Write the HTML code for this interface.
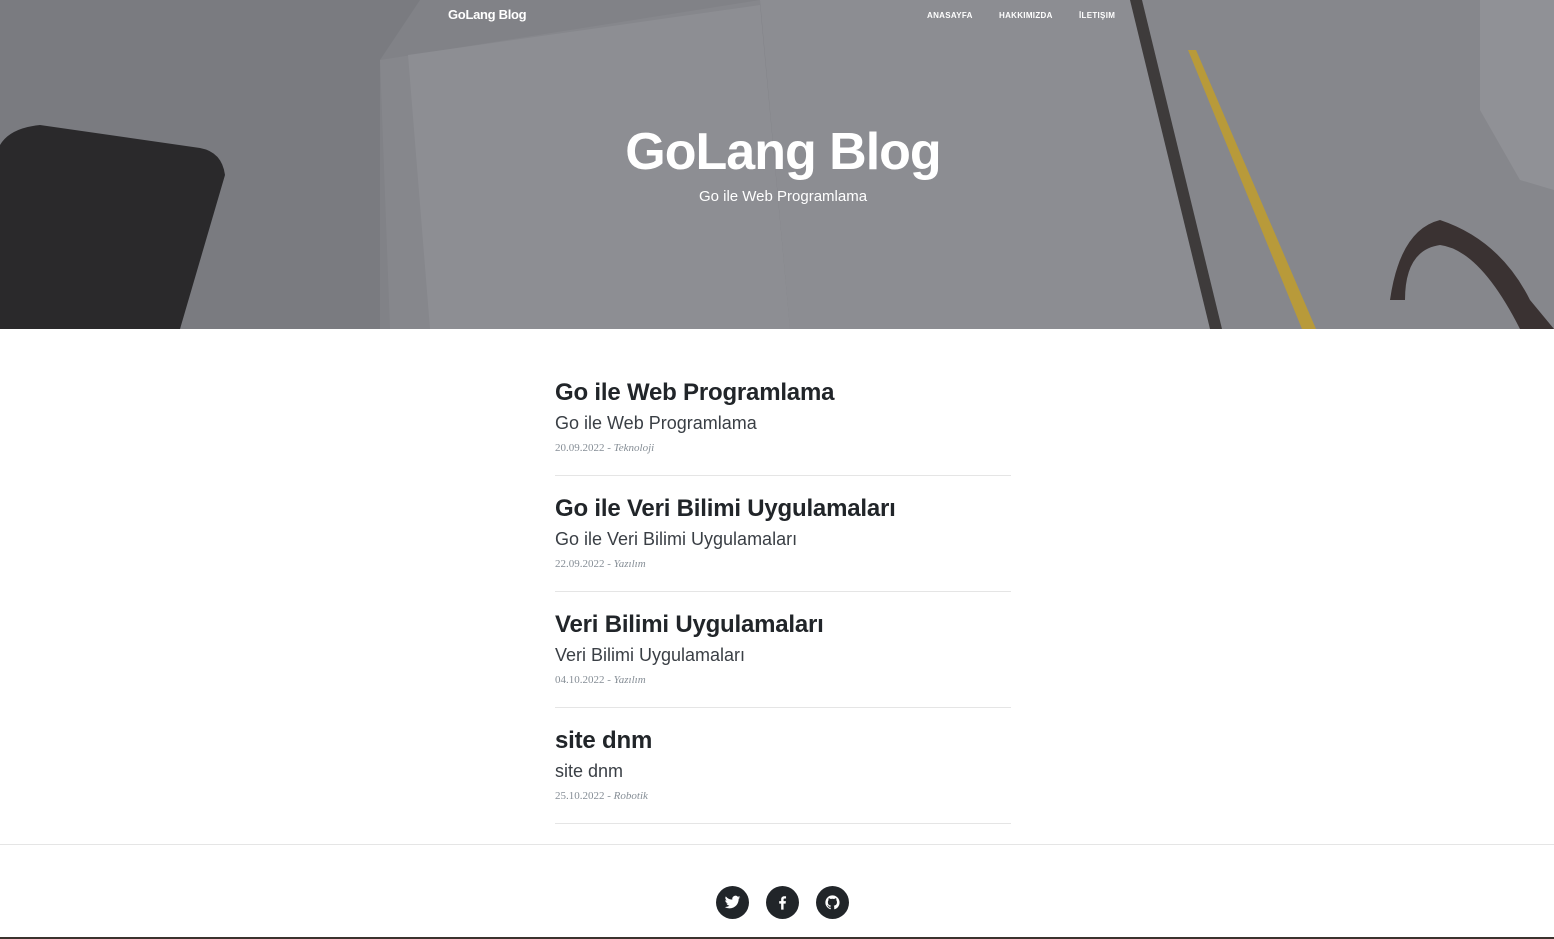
<!DOCTYPE html>
<html><head><meta charset="utf-8"><style>
*{margin:0;padding:0;box-sizing:border-box}
body{width:1554px;height:939px;overflow:hidden;background:#fff;font-family:"Liberation Sans",sans-serif;position:relative}
.hdr{position:absolute;left:0;top:0;width:1554px;height:329px;overflow:hidden;background:#7d7e83}
.hdr svg{position:absolute;left:0;top:0}
.brand{position:absolute;left:448px;top:7px;color:#fff;font-weight:bold;font-size:13px;letter-spacing:-0.3px}
.nav{position:absolute;top:11px;color:#fff;font-weight:bold;font-size:8px;letter-spacing:0.3px}
h1{position:absolute;left:0;width:1566px;text-align:center;top:122px;color:#fff;font-size:52px;font-weight:bold;letter-spacing:-1px}
.sub{position:absolute;left:0;width:1566px;text-align:center;top:188px;color:#fff;font-size:15px}
.post{position:absolute;left:555px;width:456px;border-bottom:1px solid #e5e5e5;height:117px}
.post h2{font-size:24px;font-weight:bold;color:#212529;margin-top:20px;letter-spacing:-0.2px}
.post h3{font-size:18px;font-weight:normal;color:#3a3f45;margin-top:6px}
.post p{font-family:"Liberation Serif",serif;font-size:11px;color:#868e96;margin-top:8px}
.post p i{font-style:italic}
.foot{position:absolute;left:0;top:844px;width:1554px;border-top:1px solid #e5e5e5}
.ic{position:absolute;top:886px;width:33px;height:33px;border-radius:50%;background:#212529}
.ic svg{position:absolute;left:8px;top:8px}
</style></head><body>
<div class="hdr">
<svg width="1554" height="329">
<rect width="1554" height="329" fill="#818287"/>
<polygon points="0,0 420,0 380,60 380,329 0,329" fill="#7a7b80"/>
<polygon points="380,60 760,0 780,329 390,329" fill="#86878c"/>
<polygon points="760,0 1140,0 1220,329 790,329" fill="#8c8d92"/>
<polygon points="1140,0 1554,0 1554,329 1220,329" fill="#86878c"/>
<polygon points="408,55 760,5 790,329 430,329" fill="#8d8e93"/>
<polygon points="1130,0 1142,0 1222,329 1210,329" fill="#3e3b3b"/>
<polygon points="1188,50 1196,50 1316,329 1302,329" fill="#b89a3a"/>
<path d="M0,145 Q10,128 40,125 L200,148 Q222,152 225,175 L180,329 L0,329 Z" fill="#2a292b"/>
<path d="M1390,300 Q1400,230 1440,220 Q1500,240 1530,300 L1554,329 L1520,329 Q1480,250 1440,245 Q1405,250 1405,300 Z" fill="#3a3232"/>
<polygon points="1480,0 1554,0 1554,190 1520,180 1480,110" fill="#909196"/>
</svg>
<div class="brand">GoLang Blog</div>
<div class="nav" style="left:927px">ANASAYFA</div>
<div class="nav" style="left:999px">HAKKIMIZDA</div>
<div class="nav" style="left:1079px">İLETIŞIM</div>
<h1>GoLang Blog</h1>
<div class="sub">Go ile Web Programlama</div>
</div>
<div class="post" style="top:359px"><h2>Go ile Web Programlama</h2><h3>Go ile Web Programlama</h3><p>20.09.2022 - <i>Teknoloji</i></p></div>
<div class="post" style="top:475px"><h2>Go ile Veri Bilimi Uygulamaları</h2><h3>Go ile Veri Bilimi Uygulamaları</h3><p>22.09.2022 - <i>Yazılım</i></p></div>
<div class="post" style="top:591px"><h2>Veri Bilimi Uygulamaları</h2><h3>Veri Bilimi Uygulamaları</h3><p>04.10.2022 - <i>Yazılım</i></p></div>
<div class="post" style="top:707px"><h2>site dnm</h2><h3>site dnm</h3><p>25.10.2022 - <i>Robotik</i></p></div>
<div class="foot"></div>
<div class="ic" style="left:716px"><svg width="17" height="17" viewBox="0 0 24 24"><path fill="#fff" d="M23 4.6a9 9 0 0 1-2.6.7 4.5 4.5 0 0 0 2-2.5 9 9 0 0 1-2.9 1.1 4.5 4.5 0 0 0-7.7 4.1A12.8 12.8 0 0 1 2.5 3.3a4.5 4.5 0 0 0 1.4 6 4.5 4.5 0 0 1-2-.6 4.5 4.5 0 0 0 3.6 4.5 4.5 4.5 0 0 1-2 .1 4.5 4.5 0 0 0 4.2 3.1A9 9 0 0 1 1 18.3 12.8 12.8 0 0 0 7.9 20.3c8.3 0 12.8-6.9 12.8-12.8v-.6A9 9 0 0 0 23 4.6z"/></svg></div>
<div class="ic" style="left:766px"><svg width="17" height="17" viewBox="0 0 24 24"><path fill="#fff" d="M13.5 22v-8.5h2.9l.4-3.4h-3.3V8c0-1 .3-1.6 1.7-1.6H17V3.3c-.3 0-1.3-.1-2.6-.1-2.5 0-4.3 1.5-4.3 4.4v2.5H7.3v3.4h2.8V22z"/></svg></div>
<div class="ic" style="left:816px"><svg width="17" height="17" viewBox="0 0 24 24"><path fill="#fff" d="M12 2a10 10 0 0 0-3.2 19.5c.5.1.7-.2.7-.5v-1.7c-2.8.6-3.4-1.3-3.4-1.3-.5-1.2-1.1-1.5-1.1-1.5-.9-.6.1-.6.1-.6 1 .1 1.5 1 1.5 1 .9 1.5 2.3 1.1 2.9.8.1-.6.3-1.1.6-1.3-2.2-.3-4.6-1.1-4.6-5 0-1.1.4-2 1-2.7-.1-.3-.4-1.3.1-2.7 0 0 .8-.3 2.8 1a9.6 9.6 0 0 1 5 0c1.9-1.3 2.8-1 2.8-1 .5 1.4.2 2.4.1 2.7.6.7 1 1.6 1 2.7 0 3.9-2.3 4.7-4.6 5 .4.3.7.9.7 1.9V21c0 .3.2.6.7.5A10 10 0 0 0 12 2z"/></svg></div>
<div style="position:absolute;left:0;top:937px;width:1554px;height:2px;background:#3b332e"></div>
</body></html>
